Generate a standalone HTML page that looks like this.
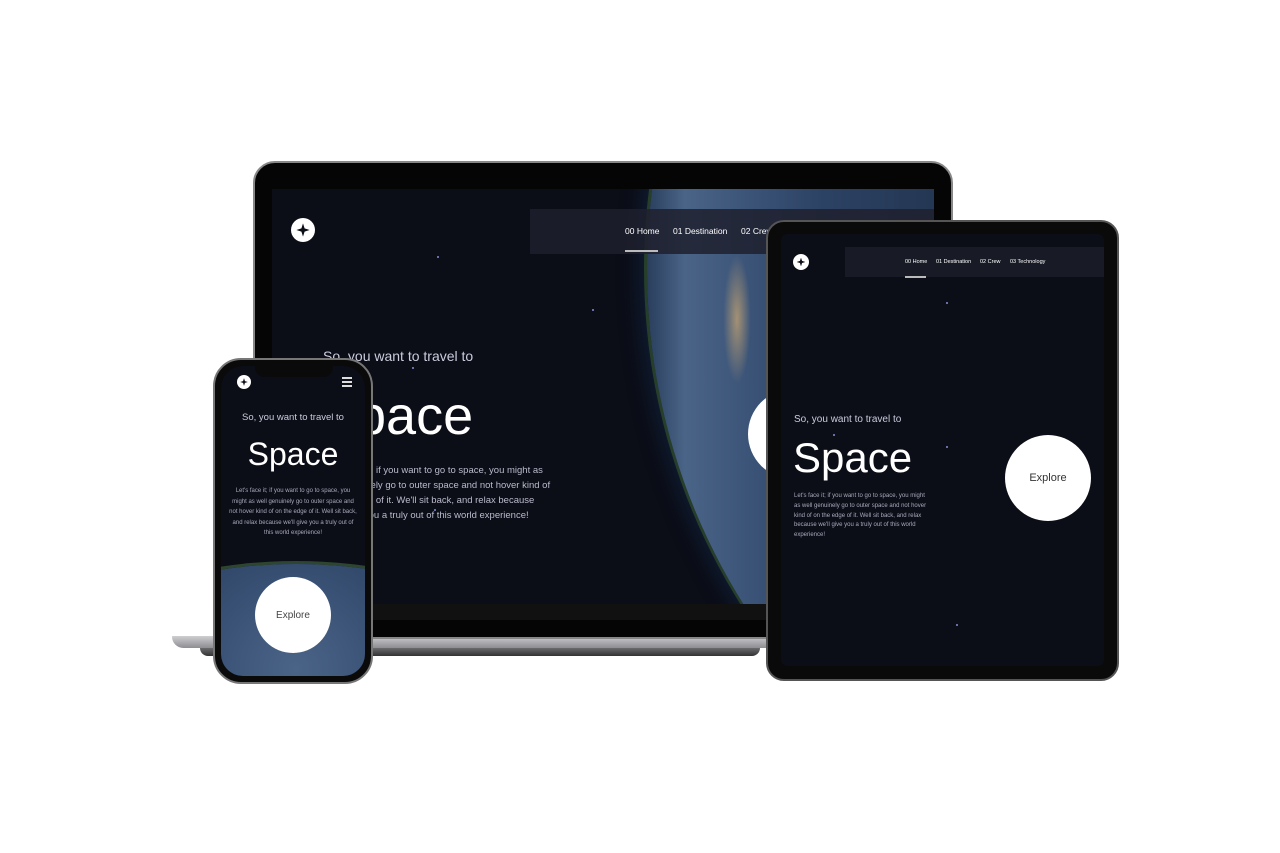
<!DOCTYPE html>
<html style="overflow:hidden"><head><style>
body{margin:0;width:1280px;height:853px;background:#fff;position:relative;overflow:hidden;font-family:"Liberation Sans",sans-serif}
.a{position:absolute}
.w{color:#fff}
.logo{border-radius:50%;background:#fff;display:flex;align-items:center;justify-content:center}
.logo:after{content:"";width:55%;height:55%;background:#0b0d17;clip-path:polygon(50% 0,62% 38%,100% 50%,62% 62%,50% 100%,38% 62%,0 50%,38% 38%)}
.star{position:absolute;width:2px;height:2px;background:#8a8fd0;border-radius:50%}
</style></head><body>
<!-- laptop base -->
<div class="a" style="left:172px;top:636px;width:610px;height:12px;background:linear-gradient(#cfcfd2,#8d8d92);border-radius:2px 2px 40px 40px"></div>
<div class="a" style="left:200px;top:648px;width:560px;height:8px;background:linear-gradient(#6a6a6e,#333);border-radius:0 0 30px 30px"></div>
<!-- laptop lid -->
<div class="a" style="left:253px;top:161px;width:700px;height:478px;background:#050505;border-radius:22px 22px 4px 4px;border:2px solid #888;box-sizing:border-box"></div>
<div class="a" style="left:272px;top:189px;width:662px;height:415px;background:#0b0d17;overflow:hidden">
  <div class="a" style="left:375px;top:-551px;width:1262px;height:1262px;border-radius:50%;background:linear-gradient(90deg,#2a3e5c 0%,#4a6488 3%,#3b5478 8%,#2c4264 14%,#22344f 25%);box-shadow:-3px 0 0 #263f2a, -10px 0 18px #0f1c30"></div>
  <div class="a" style="left:450px;top:60px;width:30px;height:140px;background:radial-gradient(#e8b870,transparent 65%);opacity:.6"></div>
  <div class="a" style="left:258px;top:20px;width:404px;height:45px;background:rgba(30,32,46,.85)"></div>
  <div class="a logo" style="left:19px;top:29px;width:24px;height:24px"></div>
  <div class="a w" style="left:353px;top:37px;font-size:8.5px">00 Home</div>
  <div class="a" style="left:353px;top:61px;width:33px;height:2px;background:#bbb"></div>
  <div class="a w" style="left:401px;top:37px;font-size:8.5px">01 Destination</div>
  <div class="a w" style="left:469px;top:37px;font-size:8.5px">02 Crew</div>
  <div class="a" style="left:51px;top:159px;color:#ccd;font-size:14px;font-weight:300">So, you want to travel to</div>
  <div class="a w" style="left:48px;top:196px;font-size:54px;font-weight:300">Space</div>
  <div class="a" style="left:51px;top:274px;width:230px;color:#bbc;font-size:9.5px;line-height:15px">Let's face it; if you want to go to space, you might as well genuinely go to outer space and not hover kind of on the edge of it. We'll sit back, and relax because we'll give you a truly out of this world experience!</div>
  <div class="a" style="left:476px;top:200px;width:90px;height:90px;border-radius:50%;background:#fff"></div>
  <div class="star" style="left:165px;top:67px"></div><div class="star" style="left:140px;top:178px"></div><div class="star" style="left:162px;top:320px"></div><div class="star" style="left:320px;top:120px"></div>
</div>
<div class="a" style="left:272px;top:604px;width:662px;height:16px;background:#111"></div>
<!-- tablet -->
<div class="a" style="left:766px;top:220px;width:353px;height:461px;background:#0a0a0a;border-radius:18px;border:2px solid #555;box-sizing:border-box"></div>
<div class="a" style="left:781px;top:234px;width:323px;height:432px;background:#0b0d17;border-radius:6px;overflow:hidden">
  <div class="a" style="left:64px;top:13px;width:259px;height:30px;background:#181a26"></div>
  <div class="a logo" style="left:12px;top:20px;width:16px;height:16px"></div>
  <div class="a w" style="left:124px;top:25px;font-size:5.5px">00 Home</div>
  <div class="a" style="left:124px;top:42px;width:21px;height:1.5px;background:#bbb"></div>
  <div class="a w" style="left:155px;top:25px;font-size:5.5px">01 Destination</div>
  <div class="a w" style="left:199px;top:25px;font-size:5.5px">02 Crew</div>
  <div class="a w" style="left:229px;top:25px;font-size:5.5px">03 Technology</div>
  <div class="a" style="left:13px;top:180px;color:#ccd;font-size:10px">So, you want to travel to</div>
  <div class="a w" style="left:12px;top:200px;font-size:42px;font-weight:300">Space</div>
  <div class="a" style="left:13px;top:258px;width:135px;color:#aab;font-size:6px;line-height:9.8px">Let's face it; if you want to go to space, you might as well genuinely go to outer space and not hover kind of on the edge of it. Well sit back, and relax because we'll give you a truly out of this world experience!</div>
  <div class="a" style="left:224px;top:201px;width:86px;height:86px;border-radius:50%;background:#fff;display:flex;align-items:center;justify-content:center;color:#333;font-size:11px">Explore</div>
  <div class="star" style="left:165px;top:68px"></div><div class="star" style="left:165px;top:212px"></div><div class="star" style="left:175px;top:390px"></div><div class="star" style="left:52px;top:200px"></div>
</div>
<!-- phone -->
<div class="a" style="left:213px;top:358px;width:160px;height:326px;background:#0a0a0a;border-radius:28px;border:2px solid #777;box-sizing:border-box"></div>
<div class="a" style="left:221px;top:366px;width:144px;height:310px;background:#0b0d17;border-radius:22px;overflow:hidden">
  <div class="a" style="left:-200px;top:198px;width:550px;height:300px;border-radius:50%;background:radial-gradient(circle at 50% 35%,#4a6488,#2f4668 40%,#1a2d48 70%);box-shadow:0 -3px 0 #2e4530"></div>
  <div class="a" style="left:34px;top:0;width:78px;height:11px;background:#0a0a0a;border-radius:0 0 10px 10px"></div>
  <div class="a logo" style="left:16px;top:9px;width:14px;height:14px"></div>
  <div class="a" style="left:121px;top:11px;width:10px;height:10px;background:repeating-linear-gradient(#ddd 0 2px,transparent 2px 4px)"></div>
  <div class="a" style="left:0;top:46px;width:144px;text-align:center;color:#ccd;font-size:9.5px">So, you want to travel to</div>
  <div class="a w" style="left:0;top:70px;width:144px;text-align:center;font-size:32px;font-weight:300">Space</div>
  <div class="a" style="left:8px;top:120px;width:128px;text-align:center;color:#aab;font-size:6px;line-height:10.5px">Let's face it; if you want to go to space, you might as well genuinely go to outer space and not hover kind of on the edge of it. Well sit back, and relax because we'll give you a truly out of this world experience!</div>
  <div class="a" style="left:34px;top:211px;width:76px;height:76px;border-radius:50%;background:#fff;display:flex;align-items:center;justify-content:center;color:#444;font-size:10px">Explore</div>
</div>
</body></html>
